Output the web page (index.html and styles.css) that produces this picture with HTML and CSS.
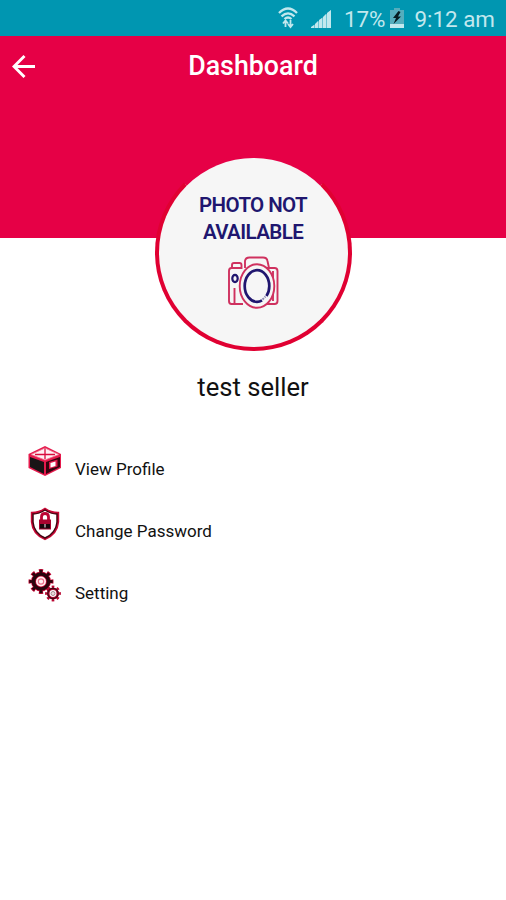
FILE: index.html
```html
<!DOCTYPE html>
<html lang="en">
<head>
  <meta charset="UTF-8">
  <meta name="viewport" content="width=device-width, initial-scale=1">
  <title>Dashboard</title>
  <link rel="stylesheet" href="styles.css">
</head>
<body>
  <div class="status-bar">
    <svg class="wifi" width="20" height="22" viewBox="0 0 20 22" fill="none" stroke="#c2e8ee" stroke-width="2.300">
      <path d="M1 6Q10-3 19 6M3.500 9.300Q10 3.500 16.500 9.300M6.500 12Q10 9 13.500 12"/>
      <path d="M7.500 20v-6M5 16.500l2.500-3 2.500 3M12.500 13v6M10 17l2.500 3 2.500-3" stroke-width="1.800"/>
    </svg>
    <svg class="signal" width="20" height="19" viewBox="0 0 20 19" fill="#c2e8ee">
      <path d="M0 19L20 1v18z" opacity=".55"/>
      <path d="M0 19v-1l3-2v3zM4 19v-4l3-3v7zM8 19v-8l3-2v10zM12 19V8l3-3v14z"/>
      <path d="M16 19V4l4-3v18z"/>
    </svg>
    <span class="battery-level">17%</span>
    <svg class="battery" width="14" height="20" viewBox="0 0 14 20">
      <path d="M4 0h6v2h4v18H0V2h4z" fill="#55adbd"/>
      <path d="M0 16h14v4H0z" fill="#c2e8ee"/>
      <path d="M8.500 3L3 10h3l-2.500 6L11 8.500H8L10.500 4z" fill="#071b20"/>
    </svg>
    <span class="clock">9:12 am</span>
  </div>
  <header>
    <button class="back" aria-label="Back">
      <svg width="24" height="24" viewBox="0 0 24 24" fill="none" stroke="#fff" stroke-width="2.900">
        <path d="M23 12.500H2M12.500 2L2 12.500 12.500 23"/>
      </svg>
    </button>
    <h1>Dashboard</h1>
  </header>
  <main>
    <div class="avatar">
      <p class="photo-text">PHOTO NOT<br>AVAILABLE</p>
      <svg class="camera" width="52" height="54" viewBox="0 0 52 54" fill="none" stroke="#cf315f" stroke-width="1.900">
        <path d="M13 12H4.500Q2 12 2 15V45Q2 48 4.500 48H16M38 12H47.500Q50.500 12 50.500 15V45Q50.500 48 47.500 48H39"/>
        <path d="M18 12V5Q18.500 1.500 22.500 1.500H36Q40 1.500 40.500 5L42 12M5 12V9Q5 7 7 7H12.500Q14.500 7 14.500 9V12H4M7.500 48V32M46 15V45"/>
        <ellipse cx="30" cy="30" rx="17.300" ry="21.800" fill="#f6f6f6"/>
        <ellipse cx="30" cy="30" rx="12.300" ry="15.800" stroke="#20166f" stroke-width="2.700" pathLength="100" stroke-dasharray="12 7 81 0"/>
        <path d="M35.500 43.500l3-3" stroke="#8b87af" stroke-dasharray="2 1"/>
        <ellipse cx="8" cy="22.500" rx="2.700" ry="3.600" stroke="#20166f" stroke-width="2.200"/>
      </svg>
    </div>
    <h2>test seller</h2>
    <ul class="menu">
      <li>
        <svg width="34" height="34" viewBox="0 0 34 34">
          <path d="M0.500 9L17 1l16 8v14L17 31 .5 23z" fill="#e5194c"/>
          <path d="M3 9.500L17 3l14 6.500L17 15z" fill="#fff1f3"/>
          <path d="M7 9.500h20M17 3v11" stroke="#d90b3d" stroke-width="1.300"/>
          <path d="M3 9.500L17 3l14 6.500L17 15z" fill="none" stroke="#ef6c89" stroke-width=".8"/>
          <path d="M2 12l14 5v12L2 22z" fill="#191416"/>
          <path d="M18 17l14-5v10l-14 7z" fill="#35040f"/>
          <path d="M21 17l8.500-2.500v7L21 24z" fill="#df174a"/>
          <path d="M22.500 18l5-1.500v4.500l-5 1.500z" fill="#fff"/>
        </svg>
        <span>View Profile</span>
      </li>
      <li>
        <svg width="34" height="34" viewBox="0 0 34 34">
          <path d="M17 2Q23 6 30 6V15Q29 27 17 32 5 27 4 15V6Q11 6 17 2z" fill="#fff" stroke="#c60734" stroke-width="2.400"/>
          <path d="M17 3Q23 7 29 7V15Q28 26 17 31 6 26 5 15V7Q11 7 17 3z" fill="none" stroke="#3c0711" stroke-width="1.400"/>
          <path d="M13.500 14V10Q13.500 6.500 17 6.500t3.500 3.500v4" fill="none" stroke="#bd0534" stroke-width="2.800"/>
          <path d="M11 12.500h12v10H11z" fill="#a8052f"/>
          <path d="M12 17h10v4.500H12z" fill="#17070c"/>
          <path d="M17 17v3.500" stroke="#b6a5aa" stroke-width="1.500"/>
        </svg>
        <span>Change Password</span>
      </li>
      <li>
        <svg width="34" height="34" viewBox="0 0 34 34" fill="none">
          <circle cx="13" cy="12.500" r="10.500" stroke="#c40834" stroke-width="4" pathLength="80" stroke-dasharray="5 5" stroke-dashoffset="2.500"/>
          <circle cx="13" cy="12.500" r="7.500" fill="#fff1f3" stroke="#d60d3d" stroke-width="5"/>
          <circle cx="13" cy="12.500" r="7.500" stroke="#29040d" stroke-width="3.600"/>
          <circle cx="13" cy="12.500" r="10.200" stroke="#29040d" stroke-width="3" pathLength="80" stroke-dasharray="3.500 6.500" stroke-dashoffset="1.750"/>
          <circle cx="13" cy="12.500" r="2.700" stroke="#ed718b" stroke-width="1.200"/>
          <circle cx="25" cy="24.500" r="6.600" stroke="#ba0732" stroke-width="2.600" pathLength="80" stroke-dasharray="5 5" stroke-dashoffset="2.500"/>
          <circle cx="25" cy="24.500" r="4.700" fill="#fff" stroke="#b10730" stroke-width="2.500"/>
          <circle cx="25" cy="24.500" r="5.200" stroke="#3a0713" stroke-width="1.200"/>
          <circle cx="25" cy="24.500" r="2" fill="#ecdadd" stroke="#a58c93"/>
        </svg>
        <span>Setting</span>
      </li>
    </ul>
  </main>
</body>
</html>
```
FILE: styles.css
```css
* {
  box-sizing: border-box;
}
body {
  margin: 0;
  min-height: 900px;
  font-family: Roboto, sans-serif;
  background: #fff;
  color: #111;
}
.status-bar {
  height: 36px;
  padding-right: 11px;
  display: flex;
  align-items: center;
  justify-content: flex-end;
  background: #0096b1;
  color: #c2e8ee;
  font-size: 22.4px;
  line-height: 36px;
  white-space: nowrap;
}
.wifi {
  margin-right: 13px;
}
.signal {
  margin-right: 13px;
}
.battery {
  margin: 0 10px 0 5px;
}
.battery-level,
.clock {
  padding-top: 1px;
}
header {
  height: 202px;
  padding: 0 12px;
  display: grid;
  grid-template-columns: 60px 1fr 60px;
  align-items: start;
  background: #e60046;
  color: #fff;
}
.back {
  height: 60px;
  padding: 0;
  display: flex;
  align-items: center;
  border: none;
  background: none;
}
h1 {
  margin: 0;
  font-size: 26.8px;
  font-weight: 500;
  line-height: 60px;
  text-align: center;
}
main {
  display: flex;
  flex-direction: column;
  align-items: center;
}
.avatar {
  width: 197px;
  height: 197px;
  margin-top: -84px;
  padding-top: 34px;
  display: flex;
  flex-direction: column;
  align-items: center;
  border: 4px solid #e00032;
  border-top-color: #e60046;
  border-radius: 50%;
  background: #f6f6f6;
}
.photo-text {
  margin: 0 0 10px;
  color: #20166f;
  font-size: 20.5px;
  font-weight: 600;
  line-height: 27px;
  letter-spacing: -0.6px;
  text-align: center;
}
h2 {
  margin: 18px 0 0;
  font-size: 25.6px;
  font-weight: 400;
  line-height: 36px;
}
.menu {
  width: 100%;
  margin: 40px 0 0;
  padding: 0 28px;
  list-style: none;
}
.menu li {
  height: 62px;
  display: flex;
  align-items: flex-start;
  gap: 13px;
  font-size: 17px;
}
.menu span {
  padding-top: 14px;
  line-height: 20px;
}
```
